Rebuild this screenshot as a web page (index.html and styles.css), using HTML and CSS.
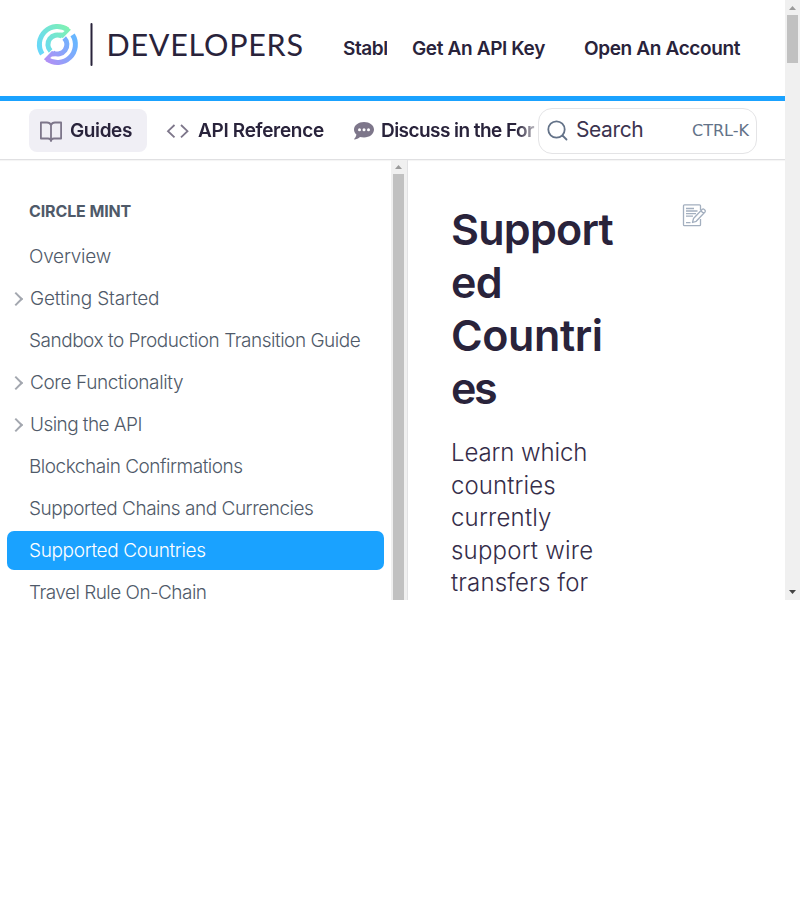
FILE: index.html
```
<!DOCTYPE html>
<html lang="en">
<head>
<meta charset="utf-8">
<title>Supported Countries</title>
<link rel="stylesheet" href="styles.css">
</head>
<body>
<div class="window">
  <div class="page">
    <header class="top">
      <svg class="logo" width="268" height="48" viewBox="0 0 268 48">
        <defs>
          <linearGradient id="g1" gradientUnits="userSpaceOnUse" x1="-18" y1="6" x2="12" y2="-14"><stop offset="0" stop-color="#68d7fa"/><stop offset="1" stop-color="#7ef1b3"/></linearGradient>
          <linearGradient id="g2" gradientUnits="userSpaceOnUse" x1="12" y1="-14" x2="-16" y2="6"><stop offset="0" stop-color="#b090f5"/><stop offset="1" stop-color="#68b6ff"/></linearGradient>
          <g id="half">
            <path d="M-15.200 9.600A18 18 0 0 1 10.300-14.800M-6.800 6.600A9.500 9.500 0 0 1 4.500-8.400" fill="none" stroke-width="5"/>
            <path d="M10-17.500 13.500-14.700 5.500-6.400 2-7.500 2-11.800 5.500-12 9-15Z" stroke="none"/>
          </g>
        </defs>
        <g transform="translate(22.400 24.500)">
          <use href="#half" fill="url(#g1)" stroke="url(#g1)"/>
          <use href="#half" fill="url(#g2)" stroke="url(#g2)" transform="rotate(180)"/>
        </g>
        <path d="M56.500 4v41" stroke="#29233b" stroke-width="2" stroke-linecap="round"/>
        <text class="logo-text" x="71.500" y="35.500" textLength="196.500">DEVELOPERS</text>
      </svg>
      <nav class="links">
        <span class="link stable">Stabl</span>
        <span class="link key">Get An API Key</span>
        <span class="link account">Open An Account</span>
      </nav>
    </header>
    <div class="bar">
      <div class="tabs">
        <span class="tab active">
          <svg width="24" height="24" viewBox="0 0 24 24" fill="none" stroke="#7d768a" stroke-width="1.800" stroke-linejoin="round"><path d="M12 6.200Q11 3.500 8 3.500H1.900V19.500H9Q12 19.500 12 22ZM12 6.200Q13 3.500 16 3.500H22.100V19.500H15Q12 19.500 12 22"/></svg>
          <span class="t-guides">Guides</span>
        </span>
        <span class="tab ref">
          <svg width="24" height="24" viewBox="0 0 24 24" fill="none" stroke="#7d768a" stroke-width="1.800"><path d="M8.500 6 2 12.200 8.500 18.400M15 6 21.500 12.200 15 18.400"/></svg>
          <span class="t-ref">API Reference</span>
        </span>
        <span class="tab forum">
          <svg width="22" height="20" viewBox="0 0 22 20"><path d="M11 1C5.500 1 1 4.200 1 8.500c0 2 .9 3.700 2.400 5-.2 1.700-1.200 3.300-2.100 4.300-.3.400 0 .9.500.8 2.500-.3 4.200-1.500 5.200-2.500 1.200.3 2.600.5 4 .5 5.600 0 10-3.600 10-8S16.600 1 11 1Z" fill="#7d768a"/><g fill="#fff"><circle cx="6.500" cy="8.700" r="1.500"/><circle cx="11" cy="8.700" r="1.500"/><circle cx="15.500" cy="8.700" r="1.500"/></g></svg>
          <span class="t-forum">Discuss in the For</span>
        </span>
      </div>
      <div class="search">
        <svg width="22" height="22" viewBox="0 0 22 22" fill="none" stroke="#637288" stroke-width="1.800" stroke-linecap="round"><circle cx="9.500" cy="9.500" r="8.200"/><path d="M15.500 15.500l4 4"/></svg>
        <span class="s-label">Search</span>
        <kbd>CTRL-K</kbd>
      </div>
    </div>
    <div class="body">
      <aside class="side">
        <h2>CIRCLE MINT</h2>
        <ul>
          <li><span class="i1">Overview</span></li>
          <li class="more"><span class="i2">Getting Started</span></li>
          <li><span class="i3">Sandbox to Production Transition Guide</span></li>
          <li class="more"><span class="i4">Core Functionality</span></li>
          <li class="more"><span class="i5">Using the API</span></li>
          <li><span class="i6">Blockchain Confirmations</span></li>
          <li><span class="i7">Supported Chains and Currencies</span></li>
          <li class="current"><span class="i8">Supported Countries</span></li>
          <li><span class="i9">Travel Rule On-Chain</span></li>
        </ul>
      </aside>
      <div class="scroll inner"><i class="up"></i><i class="thumb"></i></div>
      <main class="main">
        <div class="copy">
          <h1><span class="h-a">Support</span><br><span class="h-b">ed</span><br><span class="h-c">Countri</span><br><span class="h-d">es</span></h1>
          <p><span class="p-a">Learn which</span><br><span class="p-b">countries</span><br><span class="p-c">currently</span><br><span class="p-d">support wire</span><br><span class="p-e">transfers for</span></p>
        </div>
        <svg class="edit" width="25" height="24" viewBox="0 0 25 24" fill="none" stroke="#a3afbf" stroke-width="1.300" stroke-linejoin="round"><path d="M18.500 6V1.700Q18.500.8 17.500.8H2.500Q1.500 .8 1.500 1.700V20.700Q1.500 21.700 2.500 21.700H17.500Q18.500 21.700 18.500 20.700V15"/><path d="M4 4.500H12M4 7H15.500M4 9.600H14M4 12.200H11M4 18.600H8.500"/><path fill="#fff" d="M10.500 18.500 11.500 14.500 20.300 5.300Q21.200 4.500 22.200 5.400L23 6.200Q23.800 7.100 23 8L14.200 17.300ZM18.900 6.800 21.600 9.500"/></svg>
      </main>
    </div>
  </div>
  <div class="scroll outer"><i class="up"></i><i class="thumb"></i><i class="down"></i></div>
</div>
</body>
</html>
```
FILE: styles.css
```
* { box-sizing: border-box; }
body { margin: 0; background: #fff; color: #29233b; font-family: Inter, "Liberation Sans", sans-serif; }
.window { display: grid; grid-template-columns: 785px 15px; width: 800px; height: 600px; overflow: hidden; }
.page { height: 600px; overflow: hidden; display: flex; flex-direction: column; }
span { white-space: nowrap; }

.top { flex: none; height: 101px; border-bottom: 5px solid #1aa2ff; display: flex; align-items: flex-start; padding: 20px 0 0 35px; }
.logo { flex: none; overflow: visible; }
.logo-text { font-family: Lato, sans-serif; font-size: 30.5px; font-weight: 400; fill: #29233b; }
.links { display: flex; margin-left: 40px; padding-top: 17px; font-size: 19px; font-weight: 600; line-height: 24px; }
.stable { width: 44px; overflow: hidden; margin-right: 25px; letter-spacing: -.4px; }
.key { width: 172px; letter-spacing: -.36px; }
.account { letter-spacing: -.36px; }

.bar { flex: none; height: 59px; border-bottom: 1px solid #e0e0e2; display: flex; padding: 7px 0 0 29px; box-shadow: 0 1px 1px #0000000a; }
.tabs { display: flex; width: 506px; overflow: hidden; font-size: 19px; font-weight: 600; margin-top: 1px; height: 43px; -webkit-mask-image: linear-gradient(90deg, #000 488px, transparent 514px); mask-image: linear-gradient(90deg, #000 488px, transparent 514px); }
.tab { flex: none; display: flex; align-items: center; height: 43px; }
.tab svg, .search svg { flex: none; }
.active { width: 118px; background: #f0eff5; border-radius: 8px; padding-left: 10px; gap: 7px; }
.ref { margin-left: 19px; width: 187px; gap: 8px; }
.forum { gap: 6px; }
.t-guides { letter-spacing: -.4px; }
.t-ref { letter-spacing: -.32px; }
.t-forum { letter-spacing: -.55px; }
.search { flex: none; width: 219px; height: 46px; margin-left: 3px; border: 1.5px solid #e4e4e6; border-radius: 14px; display: flex; align-items: center; padding: 0 8px; }
.s-label { flex: none; font-size: 21px; line-height: 24px; margin: -2px 0 0 7px; width: 116px; letter-spacing: -.4px; color: #3c344f; }
kbd { font: 16px "DejaVu Sans", sans-serif; color: #637288; white-space: nowrap; margin-top: -1px; }

.body { flex: 1; min-height: 0; display: grid; grid-template-columns: 391px 16px 1fr; }
.side { overflow: hidden; padding: 41px 7px 0; color: #4f5a69; }
h2 { margin: 0 0 16px 22px; font-size: 16px; line-height: 20px; font-weight: 650; letter-spacing: -.12px; }
ul { list-style: none; margin: 0; padding: 0; }
li { height: 39px; line-height: 39px; margin-bottom: 3px; font-size: 19px; font-weight: 320; padding-left: 22px; display: flex; border-radius: 7px; }
.more { padding-left: 4px; align-items: center; }
.more::before { content: ""; flex: none; width: 8px; height: 8px; border: solid #a3a7af; border-width: 2px 2px 0 0; transform: rotate(45deg); margin-right: 9px; }
.current { width: 377px; background: #1aa2ff; color: #fff; }
.i1 { letter-spacing: -.25px; }
.i2 { letter-spacing: -.16px; }
.i3 { letter-spacing: -.48px; }
.i4 { letter-spacing: -.38px; }
.i5 { letter-spacing: -.56px; }
.i6 { letter-spacing: -.48px; }
.i7 { letter-spacing: -.47px; }
.i8 { letter-spacing: -.34px; }
.i9 { letter-spacing: -.54px; }

.main { display: flex; align-items: flex-start; border-left: 1px solid #e2e2e4; padding: 43px 0 0 43px; }
.copy { width: 231px; flex: none; }
h1 { margin: 0; font-size: 43px; line-height: 53px; font-weight: 600; }
.h-a, .h-b { letter-spacing: -.75px; }
.h-c { letter-spacing: -.4px; }
.h-d { letter-spacing: -2.5px; }
p { margin: 22px 0 0; font-size: 24px; line-height: 32.5px; font-weight: 300; color: #352d49; }
.p-a { letter-spacing: -.1px; }
.p-b { letter-spacing: .1px; }
.p-c { letter-spacing: .2px; }
.p-d { letter-spacing: .2px; }
.p-e { letter-spacing: .15px; }
.edit { flex: none; margin-top: 1px; }

.scroll { background: #f0f0f0; display: flex; flex-direction: column; align-items: center; }
.scroll i { flex: none; }
.up { width: 7px; height: 4px; margin-top: 6px; background: #9b9b9b; clip-path: polygon(50% 0, 100% 100%, 0 100%); }
.down { width: 7px; height: 4px; margin: auto 0 6px; background: #444; clip-path: polygon(0 0, 100% 0, 50% 100%); }
.thumb { width: 11px; background: #c1c1c1; }
.outer .thumb { height: 48px; margin-top: 5px; }
.inner { padding-right: 1px; }
.inner .up { margin-top: 5px; }
.inner .thumb { height: 430px; margin-top: 5px; }
```
